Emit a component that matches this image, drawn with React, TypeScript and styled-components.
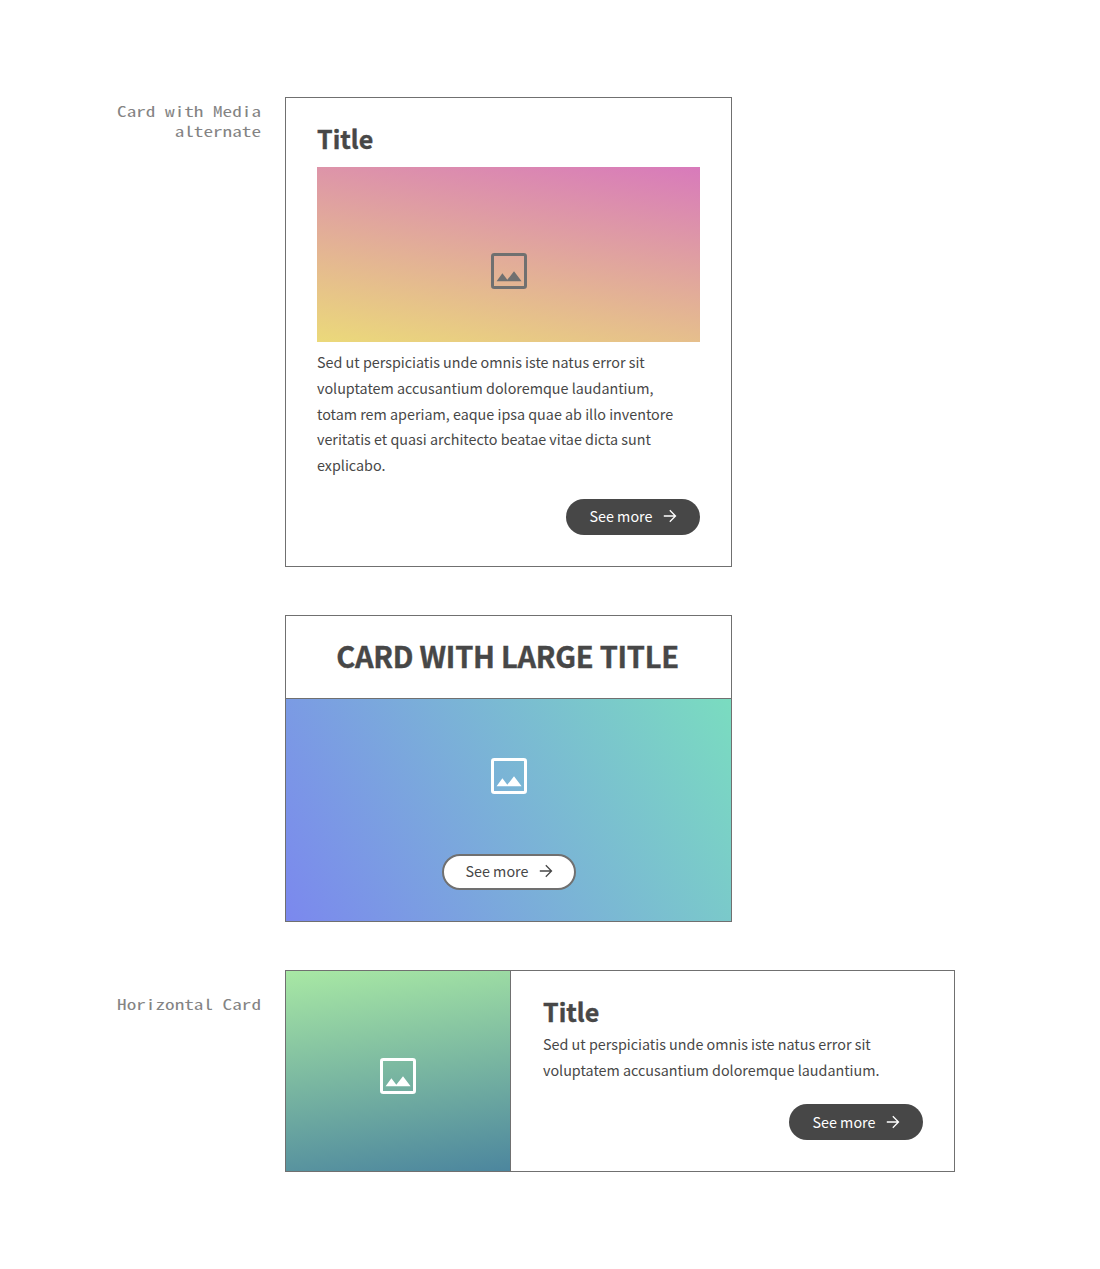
import React from "react";
import styled, { createGlobalStyle } from "styled-components";

const INK = "#474747";
const LINE = "#707070";

const GlobalStyle = createGlobalStyle`
  *, *::before, *::after { box-sizing: border-box; }
  body {
    margin: 0;
    background: #fff;
    color: ${INK};
    font-family: "Source Sans Pro", "Noto Sans CJK SC", "Noto Sans", sans-serif;
    font-size: 14.33px;
  }
`;

const Page = styled.main`
  display: flex;
  flex-direction: column;
  gap: 48px;
  padding: 97px 0 97px 85px;
`;

const Example = styled.section`
  display: grid;
  grid-template-columns: 176px auto;
  column-gap: 24px;
  justify-content: start;
  align-items: start;
`;

const Label = styled.p<{ $offset: number }>`
  margin: 0;
  padding-top: ${(p) => p.$offset}px;
  text-align: right;
  color: #848484;
  font-family: "Noto Sans Mono CJK SC", "Liberation Mono", monospace;
  font-size: 14.4px;
  line-height: 20px;
  transform: scaleX(1.3333);
  transform-origin: right top;
`;

const Card = styled.article<{ $width: number; $height: number; $row?: boolean }>`
  display: flex;
  flex-direction: ${(p) => (p.$row ? "row" : "column")};
  width: ${(p) => p.$width}px;
  height: ${(p) => p.$height}px;
  border: 1px solid ${LINE};
`;

const Body = styled.div<{ $indent?: number }>`
  flex: 1;
  display: flex;
  flex-direction: column;
  padding: 22px 31px 31px ${(p) => p.$indent ?? 31}px;
`;

const Title = styled.h2`
  margin: 0;
  font-size: 25px;
  font-weight: 700;
  line-height: 36px;
  -webkit-text-stroke: 0.4px currentColor;
`;

const Text = styled.p<{ $gap?: number }>`
  margin: ${(p) => p.$gap ?? 0}px 0 0;
  line-height: 25.7px;
  white-space: pre-line;
`;

const Header = styled.header`
  display: flex;
  align-items: center;
  justify-content: center;
  height: 83px;
  padding: 0 2px 4px 0;
  border-bottom: 1px solid ${LINE};
`;

const LargeTitle = styled.h2`
  margin: 0;
  font-size: 29px;
  font-weight: 700;
  line-height: 40px;
  letter-spacing: -0.26px;
  text-transform: uppercase;
  white-space: nowrap;
  -webkit-text-stroke: 0.4px currentColor;
`;

const Media = styled.div<{ $fill: string }>`
  display: flex;
  align-items: center;
  justify-content: center;
  background: ${(p) => p.$fill};
`;

const InsetMedia = styled(Media)`
  height: 175px;
  margin: 11px 0 7.3px;
  padding-top: 33px;
`;

const CoverMedia = styled(Media)`
  flex: 1;
  flex-direction: column;
  justify-content: flex-end;
  gap: 60px;
  padding-bottom: 31px;
`;

const SideMedia = styled(Media)`
  width: 225px;
  padding-top: 10px;
  border-right: 1px solid ${LINE};
`;

const Button = styled.button<{ $outline?: boolean; $lift?: number }>`
  display: inline-flex;
  align-items: center;
  gap: 11px;
  align-self: ${(p) => (p.$outline ? "center" : "flex-end")};
  width: 134px;
  height: 36px;
  margin-top: ${(p) => (p.$outline ? 0 : "auto")};
  padding: 0 0 ${(p) => p.$lift}px ${(p) => (p.$outline ? 22 : 23.5)}px;
  border: ${(p) => (p.$outline ? `2px solid ${LINE}` : "0")};
  border-radius: 18px;
  background: ${(p) => (p.$outline ? "#fff" : INK)};
  color: ${(p) => (p.$outline ? INK : "#fff")};
  font: inherit;
  line-height: 20px;
  white-space: nowrap;
`;

const PictureSvg = styled.svg<{ $color: string }>`
  display: block;
  flex: none;
  color: ${(p) => p.$color};
`;

const ArrowSvg = styled.svg`
  display: block;
  flex: none;
`;

const Picture = ({ color = "#fff" }: { color?: string }) => (
  <PictureSvg $color={color} width="36" height="36" viewBox="0 0 36 36">
    <rect x="1.5" y="1.5" width="33" height="33" rx="1.8" fill="none" stroke="currentColor" strokeWidth="3" />
    <path d="M5.6 28.3 11.4 20.2 16.3 26.8 23 18.2 30.6 28.3Z" fill="currentColor" />
  </PictureSvg>
);

const SeeMore = ({ outline = false, lift = 2 }: { outline?: boolean; lift?: number }) => (
  <Button $outline={outline} $lift={lift}>
    See more
    <ArrowSvg width="14" height="14" viewBox="0 0 14 14" fill="none" stroke="currentColor" strokeWidth="1.3">
      <path d="M.8 7H12.3M6.8 1.3 12.5 7 6.8 12.7" />
    </ArrowSvg>
  </Button>
);

export default function App() {
  return (
    <>
      <GlobalStyle />
      <Page>
        <Example>
          <Label $offset={4}>Card with Media alternate</Label>
          <Card $width={447} $height={470}>
            <Body>
              <Title>Title</Title>
              <InsetMedia $fill="linear-gradient(10deg, #ebd97a, #d87abb)">
                <Picture color={LINE} />
              </InsetMedia>
              <Text>
                {"Sed ut perspiciatis unde omnis iste natus error sit\nvoluptatem accusantium doloremque laudantium,\ntotam rem aperiam, eaque ipsa quae ab illo inventore\nveritatis et quasi architecto beatae vitae dicta sunt\nexplicabo."}
              </Text>
              <SeeMore />
            </Body>
          </Card>
        </Example>
        <Example>
          <span />
          <Card $width={447} $height={307}>
            <Header>
              <LargeTitle>Card with large title</LargeTitle>
            </Header>
            <CoverMedia $fill="linear-gradient(60deg, #7b88ee, #7adcc0)">
              <Picture />
              <SeeMore outline />
            </CoverMedia>
          </Card>
        </Example>
        <Example>
          <Label $offset={24}>Horizontal Card</Label>
          <Card $width={670} $height={202} $row>
            <SideMedia $fill="linear-gradient(172deg, #a8e8a4, #4c869e)">
              <Picture />
            </SideMedia>
            <Body $indent={32}>
              <Title>Title</Title>
              <Text $gap={2}>
                {"Sed ut perspiciatis unde omnis iste natus error sit\nvoluptatem accusantium doloremque laudantium."}
              </Text>
              <SeeMore lift={0} />
            </Body>
          </Card>
        </Example>
      </Page>
    </>
  );
}
